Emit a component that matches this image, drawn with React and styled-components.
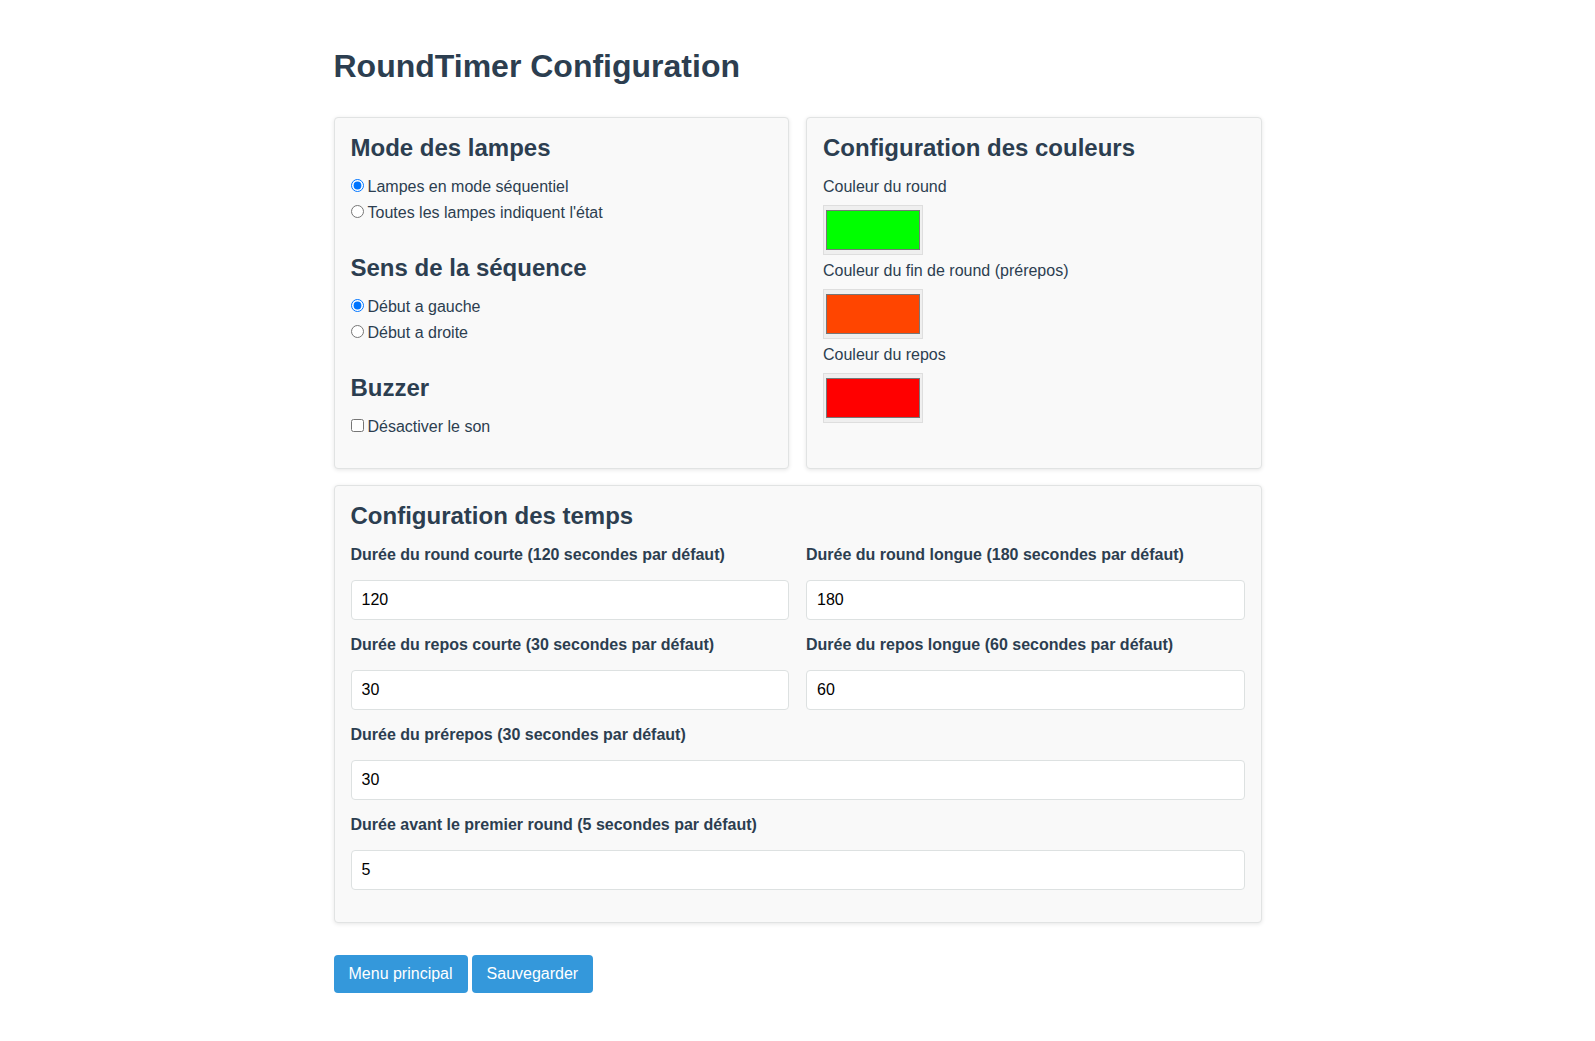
import React from "react";
import styled, { createGlobalStyle } from "styled-components";

const GlobalStyle = createGlobalStyle`
  body {
    margin: 0;
    background: #ffffff;
    color: #2c3e50;
    font-family: "Liberation Sans", Arial, sans-serif;
    font-size: 16px;
  }
`;

const Page = styled.div`
  max-width: 928px;
  margin: 0 auto;
  padding: 48px 0 48px;
`;

const Title = styled.h1`
  margin: 0 0 33px;
  font-size: 32px;
  line-height: 36px;
  font-weight: bold;
  color: #2c3e50;
`;

const TopRow = styled.div`
  display: grid;
  grid-template-columns: 1fr 1fr;
  gap: 17px;
  margin-bottom: 16px;
`;

const Card = styled.div`
  background: #f9f9f9;
  border: 1px solid #e1e3e3;
  border-radius: 4px;
  box-shadow: 0 1px 4px rgba(0, 0, 0, 0.1);
  padding: 16px;
`;

const SectionTitle = styled.h2`
  margin: 0 0 12px;
  font-size: 24px;
  line-height: 28px;
  font-weight: bold;
  color: #2c3e50;
`;

const Section = styled.div`
  & + & {
    margin-top: 16px;
  }
`;

const OptionList = styled.div`
  padding-bottom: 12px;
`;

const Option = styled.label`
  display: block;
  line-height: 26px;
  color: #2c3e50;

  input {
    margin: 3px 4px 0 0;
  }
`;

const ColorLabel = styled.div`
  line-height: 26px;
  color: #2c3e50;
`;

const ColorInput = styled.input`
  display: block;
  box-sizing: border-box;
  width: 100px;
  height: 50px;
  margin: 5px 0 3px;
  padding: 4px 2px;
  border: 1px solid #dedede;
  border-radius: 0;
  background: #efefef;

  &::-webkit-color-swatch-wrapper {
    padding: 0;
  }
  &::-webkit-color-swatch {
    border: 1px solid #777777;
    border-radius: 0;
  }
`;

const FieldGrid = styled.div`
  display: grid;
  grid-template-columns: 1fr 1fr;
  column-gap: 17px;
  row-gap: 12px;
  padding-bottom: 16px;
`;

const Field = styled.div`
  grid-column: ${(p) => (p.$wide ? "1 / -1" : "auto")};
`;

const FieldLabel = styled.label`
  display: block;
  margin-bottom: 12px;
  line-height: 26px;
  font-weight: bold;
  color: #2c3e50;
`;

const TextInput = styled.input`
  display: block;
  box-sizing: border-box;
  width: 100%;
  padding: 10px;
  border: 1px solid #dde1e1;
  border-radius: 4px;
  background: #ffffff;
  color: #000000;
  font-family: "Liberation Sans", Arial, sans-serif;
  font-size: 16px;
`;

const Actions = styled.div`
  display: flex;
  gap: 4px;
  margin-top: 32px;
`;

const Button = styled.button`
  padding: 10px 15px;
  border: none;
  border-radius: 4px;
  background: #3498db;
  color: #ffffff;
  font-family: "Liberation Sans", Arial, sans-serif;
  font-size: 16px;
  line-height: 18px;
  cursor: pointer;
`;

const colors = [
  { label: "Couleur du round", value: "#00ff00" },
  { label: "Couleur du fin de round (prérepos)", value: "#ff4500" },
  { label: "Couleur du repos", value: "#ff0000" },
];

const fields = [
  { label: "Durée du round courte (120 secondes par défaut)", value: "120" },
  { label: "Durée du round longue (180 secondes par défaut)", value: "180" },
  { label: "Durée du repos courte (30 secondes par défaut)", value: "30" },
  { label: "Durée du repos longue (60 secondes par défaut)", value: "60" },
  { label: "Durée du prérepos (30 secondes par défaut)", value: "30", wide: true },
  { label: "Durée avant le premier round (5 secondes par défaut)", value: "5", wide: true },
];

const App = () => {
  return (
    <Page>
      <GlobalStyle />
      <Title>RoundTimer Configuration</Title>

      <TopRow>
        <Card>
          <Section>
            <SectionTitle>Mode des lampes</SectionTitle>
            <OptionList>
              <Option>
                <input type="radio" name="mode" defaultChecked />
                Lampes en mode séquentiel
              </Option>
              <Option>
                <input type="radio" name="mode" />
                Toutes les lampes indiquent l'état
              </Option>
            </OptionList>
          </Section>
          <Section>
            <SectionTitle>Sens de la séquence</SectionTitle>
            <OptionList>
              <Option>
                <input type="radio" name="sens" defaultChecked />
                Début a gauche
              </Option>
              <Option>
                <input type="radio" name="sens" />
                Début a droite
              </Option>
            </OptionList>
          </Section>
          <Section>
            <SectionTitle>Buzzer</SectionTitle>
            <OptionList>
              <Option>
                <input type="checkbox" />
                Désactiver le son
              </Option>
            </OptionList>
          </Section>
        </Card>

        <Card>
          <SectionTitle>Configuration des couleurs</SectionTitle>
          {colors.map((c) => (
            <div key={c.label}>
              <ColorLabel>{c.label}</ColorLabel>
              <ColorInput type="color" defaultValue={c.value} />
            </div>
          ))}
        </Card>
      </TopRow>

      <Card>
        <SectionTitle>Configuration des temps</SectionTitle>
        <FieldGrid>
          {fields.map((f) => (
            <Field key={f.label} $wide={f.wide}>
              <FieldLabel>{f.label}</FieldLabel>
              <TextInput type="number" defaultValue={f.value} />
            </Field>
          ))}
        </FieldGrid>
      </Card>

      <Actions>
        <Button>Menu principal</Button>
        <Button>Sauvegarder</Button>
      </Actions>
    </Page>
  );
};

export default App;
